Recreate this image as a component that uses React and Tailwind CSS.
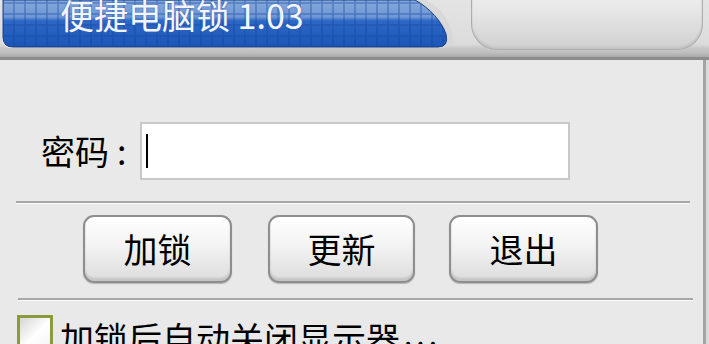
import React from "react";

const cjk = { fontFamily: '"Noto Sans CJK SC", "Noto Sans", sans-serif' };

function BlueTab() {
  return (
    <svg className="absolute inset-0" width="452" height="49" viewBox="0 0 452 49">
      <defs>
        <linearGradient id="bt" x1="0" y1="0" x2="0" y2="1">
          <stop offset="0" stopColor="#86a9dc" />
          <stop offset="0.36" stopColor="#6f97d4" />
          <stop offset="0.44" stopColor="#2d68c6" />
          <stop offset="1" stopColor="#1b55b6" />
        </linearGradient>
        <pattern id="grid" x="1" y="3" width="11" height="11" patternUnits="userSpaceOnUse">
          <rect x="0" y="0" width="11" height="11" fill="none" stroke="#12449e" strokeWidth="1.4" />
        </pattern>
        <linearGradient id="rim" x1="0" y1="0" x2="1" y2="0">
          <stop offset="0" stopColor="#f2f2f2" />
          <stop offset="1" stopColor="#d6d6d6" />
        </linearGradient>
      </defs>
      <path d="M0,0 H424 C440,8 450,24 451,38 Q452,48 440,48 H10 Q0,48 0,38 Z" fill="url(#rim)" opacity="0.8" />
      <path d="M1,0 H413 C428,8 440,22 444,34 Q447,47 436,47 H11 Q1,47 1,37 Z" fill="url(#bt)" stroke="#1a3f7e" strokeWidth="1" />
      <path d="M1,0 H413 C428,8 440,22 444,34 Q447,47 436,47 H11 Q1,47 1,37 Z" fill="url(#grid)" opacity="0.45" />
    </svg>
  );
}

function Btn({ children, className }) {
  return (
    <div
      className={
        "h-[68px] rounded-[11px] border-2 border-[#8e8e8e] bg-[linear-gradient(to_bottom,#ffffff_0%,#f3f3f3_45%,#dcdcdc_100%)] shadow-[inset_0_-3px_2px_#c4c4c4,inset_0_2px_0_#ffffff,0_1px_1px_#b5b5b5] flex items-center justify-center text-[34px] text-black leading-none " +
        className
      }
      style={cjk}
    >
      {children}
    </div>
  );
}

export default function App() {
  return (
    <div className="w-[709px] h-[344px] overflow-hidden bg-[#dadada] flex flex-col" style={cjk}>
      {/* header */}
      <div className="h-[60px] shrink-0 flex items-start border-b-[3px] border-[#8c8c8c] bg-[linear-gradient(to_bottom,#e4e4e4_0px,#dcdcdc_44px,#c9c9c9_48px,#bdbdbd_53px,#a9a9a9_57px)]">
        <div className="relative ml-[2px] w-[452px] h-[49px] shrink-0">
          <BlueTab />
          <div className="relative pl-[58px] -mt-[5px] text-[34px] leading-[40px] text-[#f2f5ff] [text-shadow:0_0_2px_#3a66b8]">
            便捷电脑锁 1.03
          </div>
        </div>
        <div className="ml-[17px] w-[232px] h-[50px] rounded-b-[26px] border border-t-0 border-[#adadad] bg-[linear-gradient(to_bottom,#ececec,#dcdcdc_60%,#d0d0d0)] shadow-[inset_0_-2px_2px_#c2c2c2]" />
      </div>

      {/* panel */}
      <div className="flex-1 w-[706px] bg-[#e9e9e9] border-r-[3px] border-[#a3a3a3] flex flex-col">
        <div className="mt-[62px] flex items-center h-[58px]">
          <div className="ml-[41px] w-[99px] flex items-center text-[34px] leading-none text-black">
            <span>密码</span>
            <span className="ml-[8px]">:</span>
          </div>
          <div className="w-[430px] h-[58px] border-2 border-[#c8c8c8] bg-white flex items-center">
            <div className="ml-[4px] w-[2px] h-[34px] bg-black" />
          </div>
        </div>

        <div className="mt-[21px] ml-[16px] w-[674px] h-[3px] border-t-2 border-[#a7a7a7] bg-[#fafafa]" />

        <div className="mt-[11px] ml-[83px] flex">
          <Btn className="w-[149px]">加锁</Btn>
          <Btn className="ml-[36px] w-[147px]">更新</Btn>
          <Btn className="ml-[34px] w-[149px]">退出</Btn>
        </div>

        <div className="mt-[15px] ml-[18px] w-[675px] h-[3px] border-t-2 border-[#a7a7a7] bg-[#fafafa]" />

        <div className="mt-[14px] flex items-start">
          <div className="ml-[17px] w-[36px] h-[36px] border-[3px] border-[#8b9a3a] bg-[linear-gradient(135deg,#d6d6d6,#ffffff_55%,#f2f2f2)]" />
          <div className="ml-[7px] -mt-[4px] text-[34px] leading-[44px] text-black whitespace-nowrap">
            加锁后自动关闭显示器<span className="ml-[4px] text-[30px] tracking-[4px] align-[6px]">...</span>
          </div>
        </div>
      </div>
    </div>
  );
}
